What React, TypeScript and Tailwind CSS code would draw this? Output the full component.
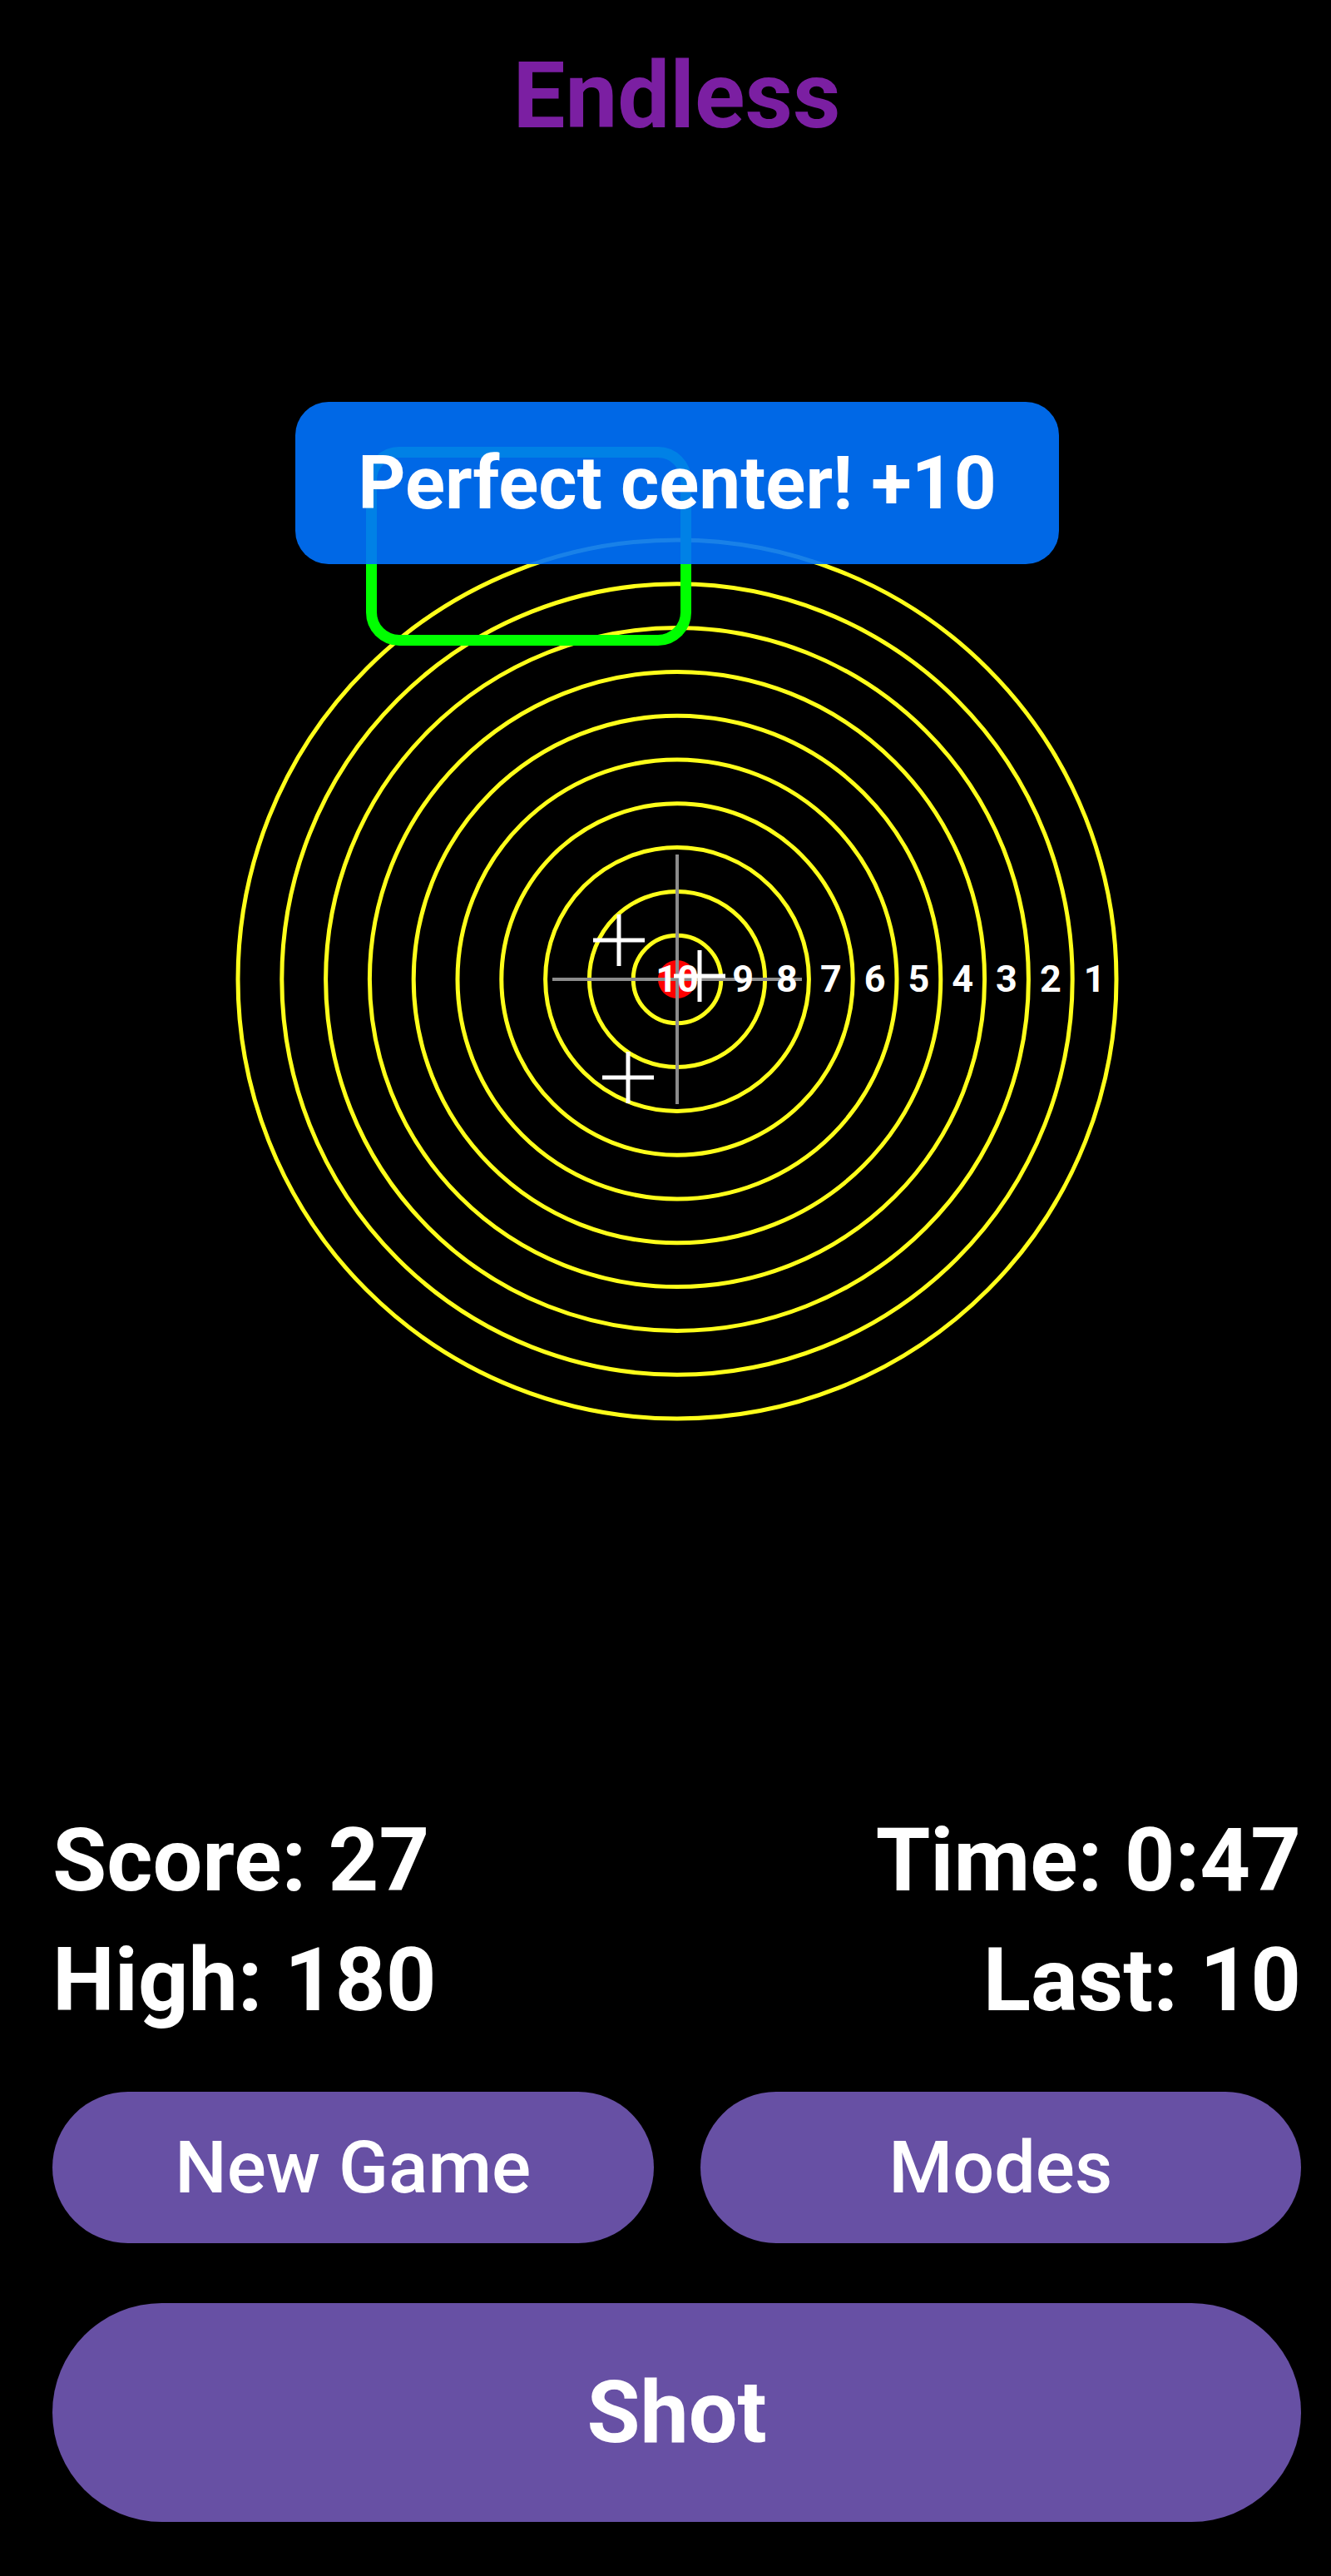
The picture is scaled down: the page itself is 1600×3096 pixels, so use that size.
import React from 'react';

const RING_STEP = 52.8;
const CENTER = 550;

// shot markers, in target coordinates
const shots = [
  { x: 480, y: 503 },
  { x: 491, y: 668 },
  { x: 577, y: 546 },
];

const Target: React.FC = () => {
  const rings = Array.from({ length: 10 }, (_, i) => (i + 1) * RING_STEP);
  const labels = Array.from({ length: 9 }, (_, i) => 9 - i);

  return (
    <svg width="1100" height="1100" viewBox="0 0 1100 1100" className="block">
      {rings.map((r) => (
        <circle key={r} cx={CENTER} cy={CENTER} r={r} fill="none" stroke="#ffff1a" strokeWidth="5" />
      ))}
      <circle cx={CENTER} cy={CENTER} r="23" fill="#ff0000" />
      {/* crosshair */}
      <line x1={CENTER - 150} y1={CENTER} x2={CENTER + 150} y2={CENTER} stroke="#8c8c8c" strokeWidth="4" />
      <line x1={CENTER} y1={CENTER - 150} x2={CENTER} y2={CENTER + 150} stroke="#8c8c8c" strokeWidth="4" />
      {/* ring numbers */}
      <g fill="#ffffff" fontFamily="Roboto, sans-serif" fontWeight="700" fontSize="45" textAnchor="middle">
        <text x={CENTER} y="565">10</text>
        {labels.map((n) => (
          <text key={n} x={CENTER + (10.5 - n) * RING_STEP} y="565">
            {n}
          </text>
        ))}
      </g>
      {shots.map((s, i) => (
        <g key={i} stroke="#ffffff" strokeWidth="5">
          <line x1={s.x - 31} y1={s.y} x2={s.x + 31} y2={s.y} />
          <line x1={s.x} y1={s.y - 31} x2={s.x} y2={s.y + 31} />
        </g>
      ))}
    </svg>
  );
};

export default function App() {
  return (
    <div className="relative flex h-[3096px] w-full flex-col overflow-hidden bg-black pl-[63px] pr-[36px] font-['Roboto',sans-serif] text-white">
      <h1 className="mt-[59px] text-center text-[112px] font-bold leading-none text-[#7b1fa2]">Endless</h1>

      <div className="mx-auto mt-[456px] h-[1100px] w-[1100px] shrink-0">
        <Target />
      </div>

      {/* stats */}
      <div className="mt-[437px] flex flex-col text-[106px] font-bold leading-[144px]">
        <div className="flex justify-between">
          <span>Score: 27</span>
          <span>Time: 0:47</span>
        </div>
        <div className="flex justify-between">
          <span>High: 180</span>
          <span>Last: 10</span>
        </div>
      </div>

      <div className="mt-[62px] grid grid-cols-2 gap-[56px]">
        <button className="flex h-[182px] items-center justify-center rounded-full bg-[#6750a4] text-[88px] font-medium leading-none text-white">
          New Game
        </button>
        <button className="flex h-[182px] items-center justify-center rounded-full bg-[#6750a4] text-[88px] font-medium leading-none text-white">
          Modes
        </button>
      </div>

      <button className="mt-[72px] flex h-[263px] items-center justify-center rounded-full bg-[#6750a4] text-[104px] font-bold leading-none text-white">
        Shot
      </button>

      {/* hit highlight box */}
      <div className="absolute left-[440px] top-[537px] h-[239px] w-[391px] rounded-[40px] border-[13px] border-[#00ff00]" />

      {/* toast */}
      <div className="absolute left-[355px] top-[483px] flex h-[195px] w-[918px] items-center justify-center rounded-[40px] bg-[#0073ff]/90">
        <span className="text-[89px] font-bold leading-none text-white">Perfect center! +10</span>
      </div>
    </div>
  );
}
